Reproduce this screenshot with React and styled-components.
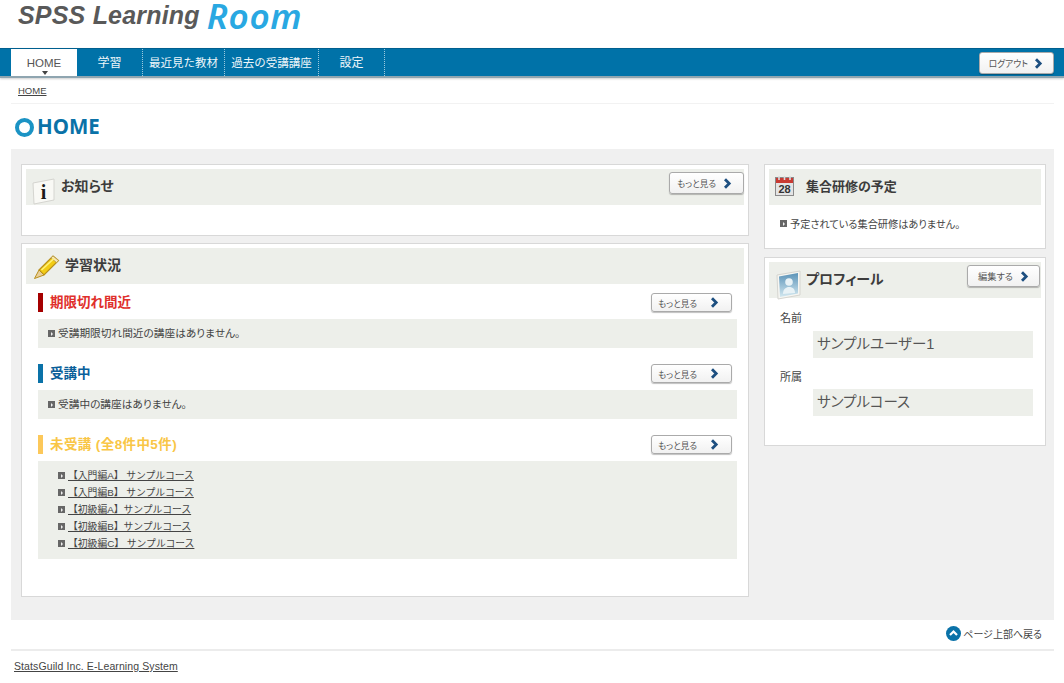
import React from "react";
import styled, { createGlobalStyle } from "styled-components";

const Global = createGlobalStyle`
  html, body { margin: 0; padding: 0; background: #fff; }
  body { font-family: "Liberation Sans", "Noto Sans CJK JP", sans-serif; font-size: 11px; color: #444; font-feature-settings: "palt"; }
  * { box-sizing: border-box; }
`;

const Page = styled.div`width: 1064px; height: 683px; overflow: hidden; background: #fff;`;
const Logo = styled.div`height: 48px; padding-left: 18px; display: flex; align-items: flex-start; gap: 7px; white-space: nowrap;`;
const LogoDark = styled.span`font: italic bold 25px/30px "Liberation Sans", sans-serif; color: #595959; letter-spacing: 0.2px;`;
const LogoRoom = styled.span`font: italic 600 35px/32px "Noto Sans", sans-serif; color: #29a8e2; letter-spacing: .7px;`;
const Nav = styled.nav`height: 30px; background: #0072a8; border-top: 1px solid #005f8f; border-bottom: 2px solid #8fa5b0; box-shadow: 0 1px 2px rgba(0,0,0,.2); padding-left: 11px; display: flex; align-items: stretch; font-feature-settings: normal;`;
const NavItem = styled.div`
  width: ${p => p.$w}px; position: relative; display: flex; justify-content: center; padding-top: 6px; white-space: nowrap;
  font-size: ${p => p.$size || 12}px; line-height: 16px;
  color: ${p => p.$active ? "#555" : "#eef6fa"}; background: ${p => p.$active ? "#fff" : "transparent"};
  border-right: ${p => p.$active ? "0" : "1px dotted #9cc9de"};
`;
const Caret = styled.span`position: absolute; left: 50%; bottom: 1px; margin-left: -2px; border: 3px solid transparent; border-top: 4px solid #444; border-bottom: 0;`;
const NavEnd = styled.div`margin: 3px 10px 0 auto; font-feature-settings: "palt";`;
const Btn = styled.div`
  width: ${p => p.$w}px; height: ${p => p.$h}px; border: 1px solid #aaa; border-radius: 3px; background: linear-gradient(#fff, #f1f1f1);
  box-shadow: 0 1px 1px rgba(0,0,0,.25); display: flex; align-items: center; justify-content: flex-end; gap: ${p => p.$g}px; padding-right: ${p => p.$pr}px; font-size: ${p => p.$fs}px; color: #555; white-space: nowrap; flex: none;
`;
const Crumb = styled.div`margin: 0 10px 0 11px; height: 26px; border-bottom: 1px solid #f2f2f2; padding: 6px 0 0 7px; font-size: 9.5px; line-height: 13px;`;
const U = styled.a`color: #444; text-decoration: underline; white-space: nowrap;`;
const CourseLink = styled(U)`font-size: 9.8px; font-feature-settings: normal;`;
const Title = styled.h1`margin: 0 10px 0 15px; height: 45px; padding-bottom: 1px; display: flex; align-items: center; gap: 3px; font: bold 20.5px/24px "Noto Sans", sans-serif; color: #0a72a8;`;
const Ring = styled.span`width: 19px; height: 19px; border: 4px solid #1b93c4; border-radius: 50%; margin-top: 3px;`;
const Main = styled.main`margin: 0 10px 0 11px; height: 471px; background: #f0f0f0; padding: 15px 8px 0 10px; display: grid; grid-template-columns: 728px 282px; column-gap: 15px; align-items: start;`;
const Col = styled.div`display: flex; flex-direction: column; gap: ${p => p.$g}px;`;
const Panel = styled.section`height: ${p => p.$h}px; background: #fff; border: 1px solid #d8d8d8; padding: 4px;`;
const PanelHead = styled.div`height: 36px; background: #edefea; display: flex; align-items: center; padding: 0 0 ${p => p.$pb || 4}px ${p => p.$pl}px; position: relative; font-size: ${p => p.$fs || 14}px; font-weight: 700; color: #3c3c3c;`;
const HeadIcon = styled.span`position: absolute; left: ${p => p.$l}px; top: ${p => p.$t}px; display: flex;`;
const HeadBtn = styled.span`position: absolute; right: ${p => p.$r}px; top: ${p => p.$t}px; font-weight: 400;`;
const Sub = styled.div`margin: ${p => p.$mt}px 7px 0 12px; height: 19px; border-left: 5px solid ${p => p.$c}; padding: 0 0 0 7px; display: flex; align-items: center; justify-content: space-between; font-size: 13.5px; font-weight: 700; color: ${p => p.$t};`;
const SubText = styled.span`margin-top: -4px; letter-spacing: ${p => p.$ls || 0}px;`;
const SubBtn = styled.div`margin-right: 5px; font-weight: 400;`;
const Box = styled.div`margin: 7px 0 0 12px; width: 699px; background: #edefea; padding: ${p => p.$links ? "6px 0 7px 20px" : "6px 0 0 10px"}; height: ${p => p.$h}px; line-height: 17px; font-size: 10.7px;`;
const Row = styled.div`display: flex; align-items: center; height: 17px; gap: ${p => p.$g || 3}px; white-space: nowrap;`;
const Bullet = styled.span`width: 7px; height: 7px; background: #666; display: inline-block; position: relative; flex: none; &::after { content: ""; position: absolute; left: 2.5px; top: 1.5px; border: 2px solid transparent; border-left: 2.5px solid #eee; border-right: 0; }`;
const Plain = styled.div`padding: 10px 0 0 11px; font-size: 10.2px;`;
const Label = styled.div`margin: ${p => p.$mt}px 0 0 11px; font-size: 11px; line-height: 16px;`;
const Value = styled.div`margin: ${p => p.$mt}px 8px 0 44px; height: 27px; background: #edefea; padding-left: 4px; font-size: 14.5px; line-height: 26px; color: #555;`;
const Top = styled.div`margin-right: 22px; height: 29px; padding-bottom: 3px; display: flex; justify-content: flex-end; align-items: center; gap: 2px; font-size: 10px;`;
const Foot = styled.div`margin: 0 10px 0 11px; border-top: 2px solid #ececec; padding: 8px 0 0 3px; font-size: 10.5px; line-height: 14px; letter-spacing: .1px;`;

const Chevron = () => (
  <svg width="9" height="11" viewBox="0 0 9 11"><path d="M2 1.2 6.2 5.5 2 9.8" fill="none" stroke="#1d4f80" strokeWidth="2.8" /></svg>
);
const InfoIcon = () => (
  <svg width="24" height="27" viewBox="0 0 24 27">
    <path d="M1 5 22 1V22L2 26Z" fill="#f9f9f5" stroke="#d5d5d0" />
    <text x="11.5" y="21" textAnchor="middle" fontFamily="Liberation Serif" fontWeight="700" fontSize="20" fill="#1b1b1b">i</text>
  </svg>
);
const Pencil = () => (
  <svg width="28" height="26" viewBox="0 0 28 26">
    <path d="M7 16 21 2 26.5 6.5 12 21Z" fill="#f2cc14" stroke="#b8901c" strokeWidth="1.2" />
    <path d="M7 16 12 21 2.5 24.5Z" fill="#e9cf9a" stroke="#b8901c" />
    <path d="M21 2 26.5 6.5 24.5 8.5 19 4Z" fill="#f5e6b7" stroke="#b89a44" strokeWidth=".8" />
    <path d="M9.5 16 22 4.5" stroke="#fff27a" strokeWidth="1.6" />
  </svg>
);
const Calendar = () => (
  <svg width="20" height="21" viewBox="0 0 20 21">
    <rect x=".5" y="2.5" width="18" height="18" fill="#e4e4e4" stroke="#8a8a8a" />
    <rect x="1" y="3" width="17" height="5" fill="#c93a32" />
    <path d="M4 1v4M9.5 1v4M15 1v4" stroke="#ddd" strokeWidth="1.6" />
    <text x="9.5" y="18" textAnchor="middle" fontFamily="Liberation Sans" fontSize="11" fill="#333">28</text>
  </svg>
);
const Profile = () => (
  <svg width="26" height="30" viewBox="0 0 26 30">
    <defs><linearGradient id="pg" x1="0" y1="0" x2="0" y2="1"><stop offset="0" stopColor="#5b93b8" /><stop offset="1" stopColor="#d3e8f0" /></linearGradient></defs>
    <path d="M1 5 24 1V25L2 29Z" fill="#f6f6f2" stroke="#d5d5d0" />
    <path d="M3 6.5 22 3V23.5L4 27Z" fill="url(#pg)" />
    <circle cx="13" cy="12" r="3.8" fill="#e8f2f6" />
    <path d="M7 24c0-5 3-7 6-7s6 1.5 6 6Z" fill="#e8f2f6" />
  </svg>
);
const UpIcon = () => (
  <svg width="15" height="15" viewBox="0 0 15 15">
    <circle cx="7.5" cy="7.5" r="7.5" fill="#0a72a8" />
    <path d="M4 9 7.5 5.5 11 9" fill="none" stroke="#fff" strokeWidth="2.2" />
  </svg>
);

const courses = ["【入門編A】 サンプルコース", "【入門編B】 サンプルコース", "【初級編A】サンプルコース", "【初級編B】サンプルコース", "【初級編C】 サンプルコース"];

const More = () => <Btn $w={81} $h={19} $g={13} $pr={12} $fs={8.6}>もっと見る<Chevron /></Btn>;

export default function App() {
  return (
    <Page>
      <Global />
      <Logo><LogoDark>SPSS Learning</LogoDark><LogoRoom>Room</LogoRoom></Logo>
      <Nav>
        <NavItem $w={66} $active $size={11.5}>HOME<Caret /></NavItem>
        <NavItem $w={66}>学習</NavItem>
        <NavItem $w={82} $size={11.5}>最近見た教材</NavItem>
        <NavItem $w={94} $size={11.5}>過去の受講講座</NavItem>
        <NavItem $w={66}>設定</NavItem>
        <NavEnd><Btn $w={75} $h={22} $g={6} $pr={10} $fs={8.8}>ログアウト<Chevron /></Btn></NavEnd>
      </Nav>
      <Crumb><U>HOME</U></Crumb>
      <Title><Ring />HOME</Title>
      <Main>
        <Col $g={7}>
          <Panel $h={72}>
            <PanelHead $pl={35}>
              <HeadIcon $l={6} $t={9}><InfoIcon /></HeadIcon>
              お知らせ
              <HeadBtn $r={0} $t={3}><Btn $w={75} $h={22} $g={7} $pr={11} $fs={8.6}>もっと見る<Chevron /></Btn></HeadBtn>
            </PanelHead>
          </Panel>
          <Panel $h={354}>
            <PanelHead $pl={39} $pb={5}>
              <HeadIcon $l={6} $t={6}><Pencil /></HeadIcon>
              学習状況
            </PanelHead>
            <Sub $mt={9} $c="#a50000" $t="#e0302c"><SubText>期限切れ間近</SubText><SubBtn><More /></SubBtn></Sub>
            <Box $h={29}><Row><Bullet />受講期限切れ間近の講座はありません。</Row></Box>
            <Sub $mt={16} $c="#0a72a8" $t="#0a5f9a"><SubText>受講中</SubText><SubBtn><More /></SubBtn></Sub>
            <Box $h={29}><Row><Bullet />受講中の講座はありません。</Row></Box>
            <Sub $mt={16} $c="#fcc85a" $t="#f9c646"><SubText $ls={0.4}>未受講 (全8件中5件)</SubText><SubBtn><More /></SubBtn></Sub>
            <Box $h={98} $links>
              {courses.map(c => <Row key={c} $g={3}><Bullet /><CourseLink>{c}</CourseLink></Row>)}
            </Box>
          </Panel>
        </Col>
        <Col $g={8}>
          <Panel $h={85}>
            <PanelHead $pl={37} $pb={3} $fs={13}>
              <HeadIcon $l={6} $t={6}><Calendar /></HeadIcon>
              集合研修の予定
            </PanelHead>
            <Plain><Row><Bullet />予定されている集合研修はありません。</Row></Plain>
          </Panel>
          <Panel $h={189}>
            <PanelHead $pl={37}>
              <HeadIcon $l={7} $t={8}><Profile /></HeadIcon>
              プロフィール
              <HeadBtn $r={1} $t={3}><Btn $w={73} $h={22} $g={7} $pr={10} $fs={9.2}>編集する<Chevron /></Btn></HeadBtn>
            </PanelHead>
            <Label $mt={12}>名前</Label>
            <Value $mt={5}>サンプルユーザー1</Value>
            <Label $mt={11}>所属</Label>
            <Value $mt={4}>サンプルコース</Value>
          </Panel>
        </Col>
      </Main>
      <Top><UpIcon />ページ上部へ戻る</Top>
      <Foot><U>StatsGuild Inc. E-Learning System</U></Foot>
    </Page>
  );
}
